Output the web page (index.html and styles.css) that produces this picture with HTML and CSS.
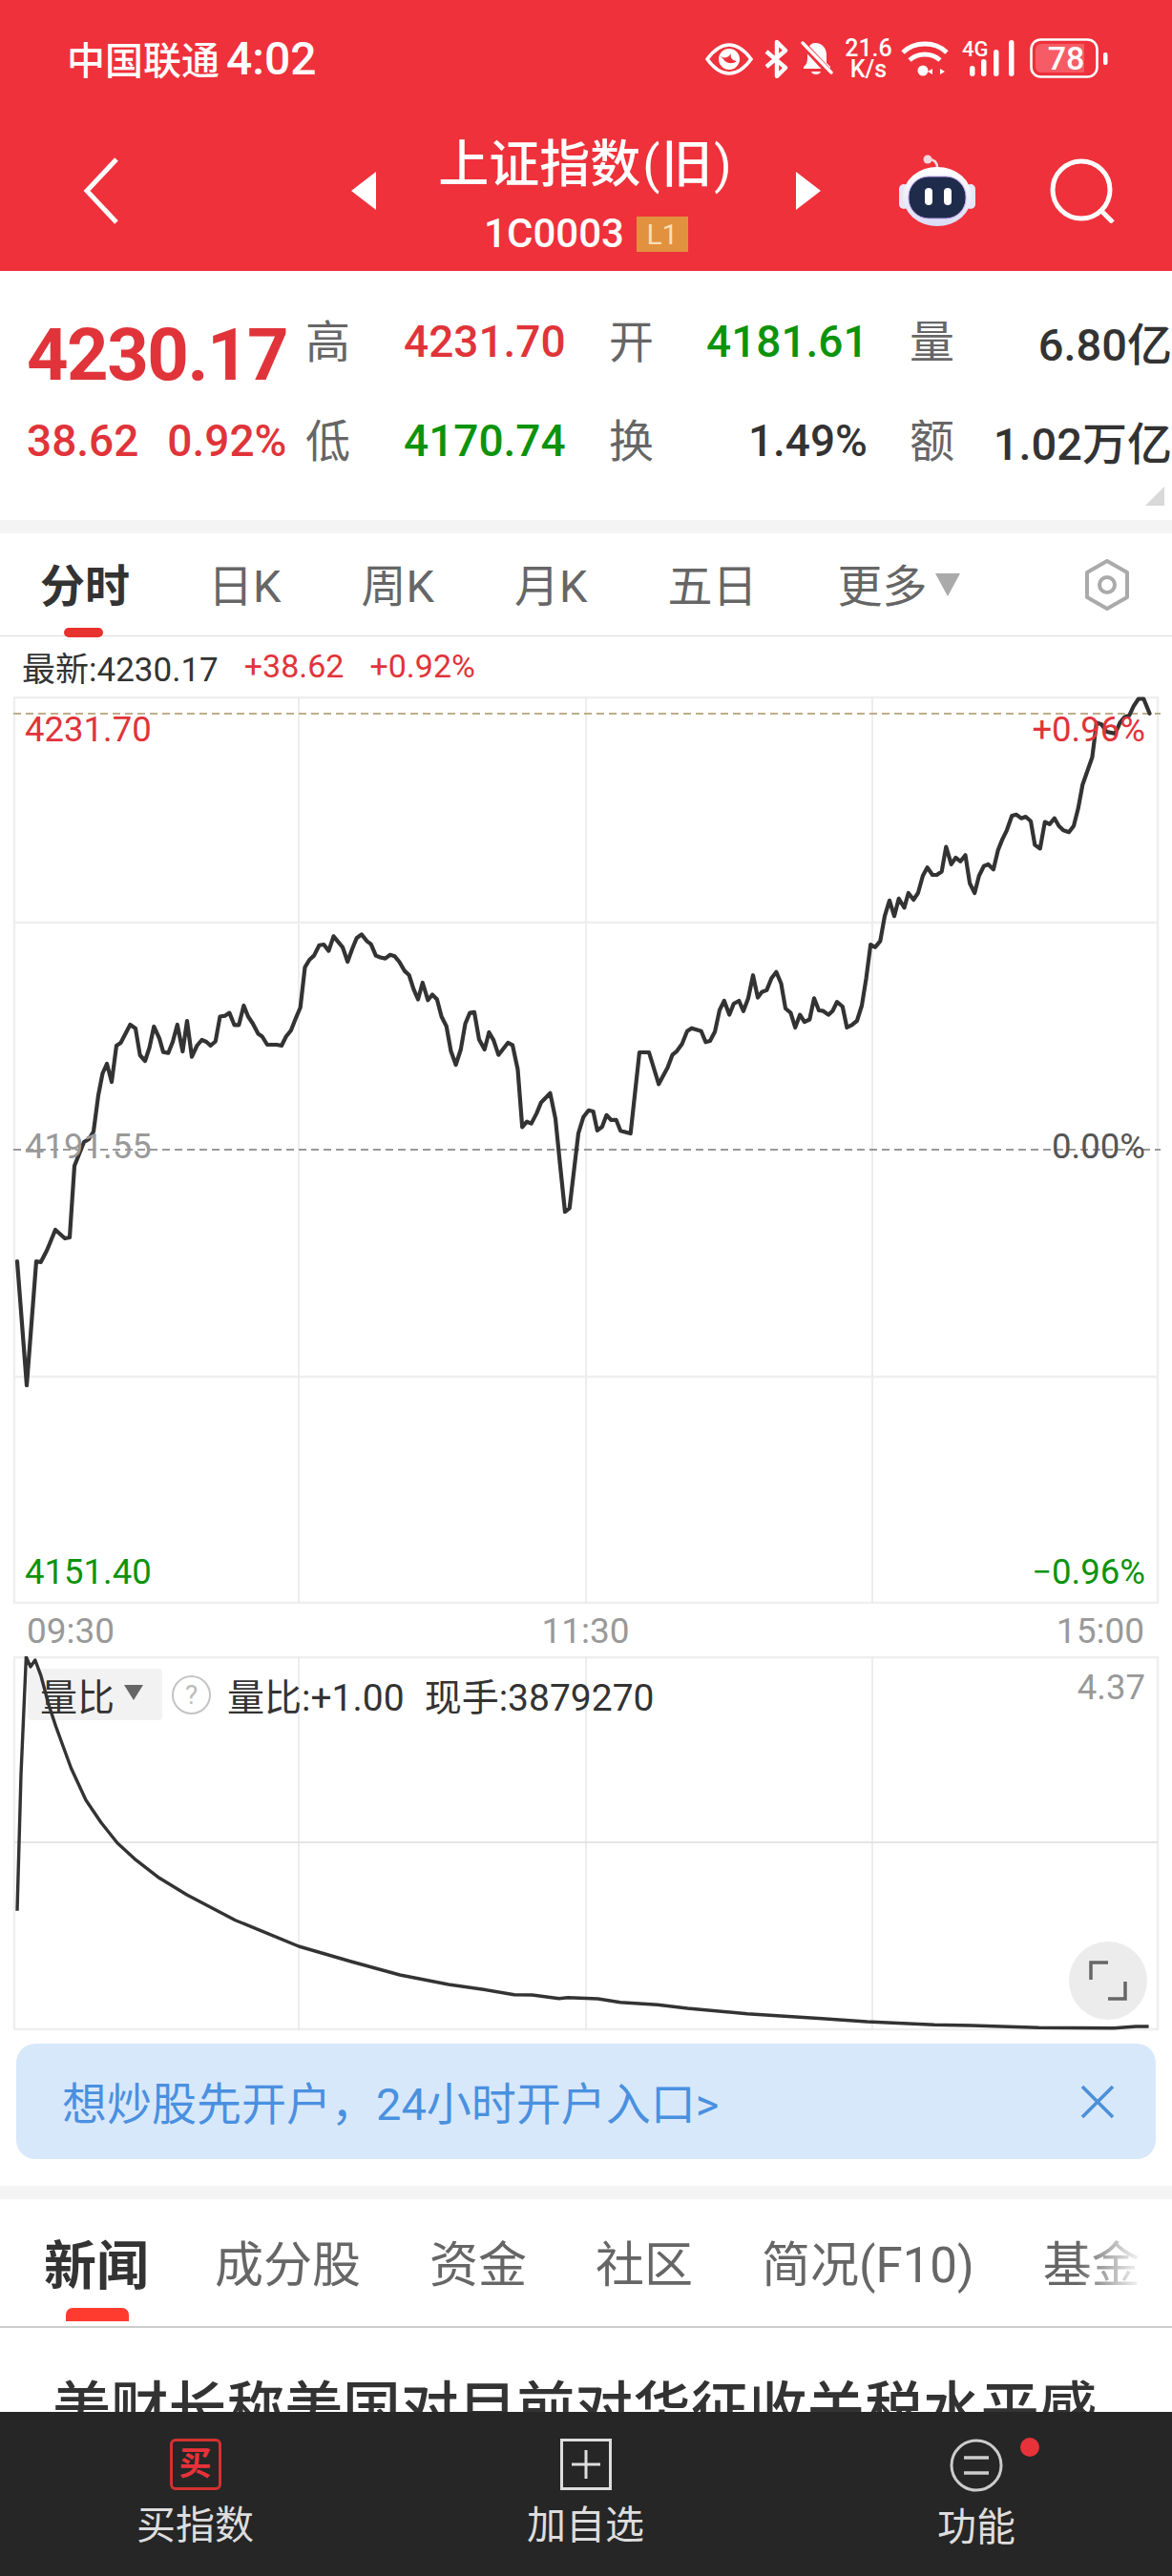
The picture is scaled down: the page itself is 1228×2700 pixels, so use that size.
FILE: index.html
```html
<!DOCTYPE html>
<html lang="zh-CN">
<head>
  <meta charset="UTF-8" />
  <meta name="viewport" content="width=device-width, initial-scale=1.0" />
  <title>上证指数(旧)</title>
  <link rel="stylesheet" href="styles.css">
</head>
<body>
  <div class="page">
    <header class="top">
      <div class="status">
        <div class="carrier">中国联通 <span class="clock">4:02</span></div>
        <div class="status-icons">
          <svg class="ic-eye" width="50" height="34" viewBox="0 0 50 34">
            <path d="M2 17C10 6 18 2 25 2s15 4 23 15c-8 11-16 15-23 15S10 28 2 17z" fill="none" stroke="#fff" stroke-width="3.600"/>
            <circle cx="25" cy="17" r="11" fill="#fff"/>
            <path d="M15 13c4 4 9 3 12-2-1 5 1 7 6 8-5 4-12 2-14-2z" fill="#ee313b"/>
          </svg>
          <svg class="ic-bt" width="28" height="40" viewBox="0 0 28 40">
            <path d="M3 12l20 17-9 9V2l9 9L3 28" fill="none" stroke="#fff" stroke-width="4.400" stroke-linejoin="round"/>
          </svg>
          <svg class="ic-bell" width="34" height="38" viewBox="0 0 34 38">
            <path d="M15 3c8 0 12 6 12 13v8l4 4v2H3v-2c3-2 4-5 4-9V10c2-4 4-7 8-7z" fill="#fff"/>
            <path d="M11 33h10c-1 4-9 4-10 0z" fill="#fff"/>
            <path d="M1 3l30 32" stroke="#ee313b" stroke-width="7"/>
            <path d="M2 3l30 31" stroke="#fff" stroke-width="3.400" stroke-linecap="round"/>
          </svg>
          <div class="speed"><span>21.6</span><span>K/s</span></div>
          <svg class="ic-wifi" width="50" height="38" viewBox="0 0 50 38">
            <path d="M2 13C14 1 36 1 48 13M9 21c9-8 23-8 32 0" fill="none" stroke="#fff" stroke-width="4.800"/>
            <circle cx="23" cy="32" r="5.500" fill="#fff"/>
            <path d="M33 30l-5 3 5 3zM41 30l5 3-5 3z" fill="#fff"/>
          </svg>
          <svg class="ic-signal" width="56" height="42" viewBox="0 0 56 42">
            <text x="0" y="19" class="net">4G</text>
            <rect x="8" y="29" width="5.500" height="11" rx="2.700" fill="#fff"/>
            <rect x="20" y="22" width="5.500" height="18" rx="2.700" fill="#fff"/>
            <rect x="33" y="12" width="5.500" height="28" rx="2.700" fill="#fff"/>
            <rect x="49" y="2" width="5.500" height="38" rx="2.700" fill="#fff"/>
          </svg>
          <svg class="ic-batt" width="82" height="42" viewBox="0 0 82 42">
            <rect x="1.500" y="1.500" width="69" height="39" rx="10" fill="none" stroke="#fff" stroke-width="2.600"/>
            <path d="M12 6h45v30H12a6 6 0 0 1-6-6V12a6 6 0 0 1 6-6z" fill="#f65c66"/>
            <text x="38" y="33" class="level">78</text>
            <rect x="77" y="15" width="4.500" height="13" rx="2" fill="#fff"/>
          </svg>
        </div>
      </div>
      <nav class="bar">
        <svg class="back" width="38" height="70" viewBox="0 0 38 70"><path d="M35 2L4 35l31 33" fill="none" stroke="#fff" stroke-width="5"/></svg>
        <span class="tri tri-left"></span>
        <div class="title">
          <div class="name">上证指数<span class="paren">(</span>旧<span class="paren">)</span></div>
          <div class="code">1C0003<span class="level-tag">L1</span></div>
        </div>
        <span class="tri tri-right"></span>
        <svg class="robot" width="80" height="76" viewBox="0 0 80 76">
          <defs>
            <linearGradient id="shell" x1="0" y1="0" x2="0" y2="1">
              <stop offset="0" stop-color="#ffffff"/>
              <stop offset="1" stop-color="#dcdcf6"/>
            </linearGradient>
          </defs>
          <circle cx="30" cy="5" r="4.500" fill="#f1d9de"/>
          <path d="M31 5c7 0 9 4 9 9" fill="none" stroke="#f1d9de" stroke-width="2.600"/>
          <rect x="0" y="31" width="10" height="26" rx="5" fill="#e6e6f8"/>
          <rect x="70" y="31" width="10" height="26" rx="5" fill="#e6e6f8"/>
          <ellipse cx="40" cy="44" rx="36" ry="31" fill="url(#shell)"/>
          <rect x="10" y="23" width="60" height="44" rx="21" fill="#1f2b4b" stroke="#b9a3ee" stroke-width="1"/>
          <rect x="27" y="35" width="8" height="18" rx="4" fill="#fff"/>
          <rect x="47" y="35" width="8" height="18" rx="4" fill="#fff"/>
        </svg>
        <svg class="search" width="68" height="68" viewBox="0 0 68 68">
          <circle cx="33" cy="33" r="30" fill="none" stroke="#fff" stroke-width="5"/>
          <path d="M52 53l14 14" stroke="#fff" stroke-width="5"/>
        </svg>
      </nav>
    </header>

    <section class="quote">
      <div class="last red">4230.17</div>
      <div class="lbl">高</div>
      <div class="val red">4231.70</div>
      <div class="lbl">开</div>
      <div class="val green mid-col">4181.61</div>
      <div class="lbl">量</div>
      <div class="val right">6.80亿</div>
      <div class="change red"><span>38.62</span><span>0.92%</span></div>
      <div class="lbl">低</div>
      <div class="val green">4170.74</div>
      <div class="lbl">换</div>
      <div class="val mid-col">1.49%</div>
      <div class="lbl">额</div>
      <div class="val right">1.02万亿</div>
      <span class="corner"></span>
    </section>

    <div class="band"></div>

    <section class="periods">
      <span class="period on">分时</span>
      <span class="period">日K</span>
      <span class="period">周K</span>
      <span class="period">月K</span>
      <span class="period">五日</span>
      <span class="period more">更多<i class="caret"></i></span>
      <svg class="gear" width="54" height="54" viewBox="0 0 54 54">
        <path d="M27 2l21 12v26L27 52 6 40V14z" fill="none" stroke="#aaa" stroke-width="4" stroke-linejoin="round"/>
        <circle cx="27" cy="27" r="8" fill="none" stroke="#aaa" stroke-width="4"/>
      </svg>
    </section>

    <div class="latest">
      <span>最新:4230.17</span>
      <span class="red">+38.62</span>
      <span class="red">+0.92%</span>
    </div>

    <section class="chart price-chart">
      <svg width="1228" height="951" viewBox="0 730 1228 951">
        <path class="grid-out" d="M15 731H1213V1680H15z"/>
        <path class="grid" d="M313 731V1680M614 731V1680M914 731V1680"/>
        <path class="grid-h" d="M15 967H1213M15 1443H1213"/>
        <path class="dash-high" d="M14 748H1216"/>
        <path class="dash-mid" d="M14 1205H1216"/>
        <polyline class="trend" points="18,1322 28,1452 38,1322 42.700,1323 49.400,1310 58,1289 68,1298 73,1297 78,1222 88,1197 93,1194 98,1186 103,1148 107.500,1125 112,1115 117,1134 122,1096 126.500,1093 136.400,1074 142,1078 146.700,1106 152,1112 156.600,1098 161.300,1076 167,1088.400 171,1102.600 176.300,1103.700 181,1092 185.800,1074 191.400,1102 196,1070 201,1107.600 206.400,1096 211.500,1090 216.300,1092 220.600,1096 225.800,1091.500 230.500,1065.500 235.700,1064.700 240.400,1061.600 245.500,1074.300 250.300,1074.300 255.400,1054 260,1065.500 265,1073 270.500,1083.500 274.800,1086.500 280,1095 290,1095 295,1096 299.700,1086.500 304.900,1080 309.600,1068 314.700,1056 319.500,1013.800 324.200,1006 329,1001.600 334.500,990.800 339.300,990 344.400,996.600 349.500,981.300 359,992.800 364.200,1008 369,994.700 373.700,983.200 378.800,979.400 384.300,986.300 388.700,989.700 393.800,1001.600 398.600,1003.500 403.700,1004.600 408.800,1000.800 413.600,1002.300 418.300,1008 423.900,1017.600 428.600,1022 433.400,1036.800 438,1047.500 442.800,1030 448.400,1048.300 453,1042.500 457.900,1047.500 462.600,1065.500 467.800,1075.800 472.500,1101.800 477.600,1116 482.800,1100 487.500,1073 492.300,1061.600 497,1060.900 502,1089.600 507.700,1100 512.400,1082 517.200,1090.400 522.300,1105.700 532.200,1093 537,1095.300 542.500,1121 547.200,1181.400 552,1175.700 556.700,1177.600 562.300,1166.900 567,1155.400 576.500,1145.800 582,1172.600 587.200,1224.300 592,1270.200 596.700,1266.400 606,1188 611.300,1170.700 616.800,1163.800 621.600,1165 625.800,1184.900 630.900,1181 635.500,1168.800 640.200,1173.800 645.600,1173.800 650.200,1185.300 660.700,1188 670,1103 680,1103 690.200,1136.300 699.500,1119 704.500,1105.700 709.100,1101.800 714.600,1094.200 720,1080.800 724.700,1077.700 734.700,1080.800 739.400,1092.300 744,1091 749,1081.600 754,1058.600 758.800,1049 764.200,1063.600 768.800,1052 774.300,1049 778.900,1059.700 784,1046.300 789,1022.200 794,1045.600 798.300,1039.800 803.300,1037.900 808.400,1025.300 813.400,1018.800 818.500,1031 823,1057 828.500,1061.600 833.200,1077 838.200,1063.600 842.900,1071.200 848.300,1068.500 853,1046.300 858,1059 862.600,1059.700 868,1063.600 872.300,1059.700 877,1050.200 882.800,1055 887.400,1077 892.500,1074.300 897.900,1070 903,1054 907.600,1025.300 912.200,990 916.900,992.800 922.300,986.300 927,960.200 932,943.800 937,960.200 941.700,941.900 947.500,951.400 951.800,936 957.200,943 961.900,936 966.900,918 971.600,909.300 977,917 981.600,917 986.700,913.500 991.300,887.500 996.700,905.900 1001.400,899 1006.400,902.800 1011.500,896.300 1016.100,925.800 1021.200,936 1025.800,918 1030.900,907.800 1035.500,905.900 1040.900,911.300 1045.600,891.400 1050.200,879.900 1054.900,870.300 1060.300,855 1065,853.800 1070,857.700 1074.700,856 1080,860.700 1084.300,885.600 1089.800,889.400 1094.800,861.500 1099.800,863.800 1104.900,857.700 1109.500,865.700 1114.200,870.300 1120,872.200 1125,865.700 1129.700,847.300 1134.300,822.500 1144.400,793.800 1149,757.400 1154.100,759.300 1159.500,767 1168.500,768.900 1173.500,757.400 1178.100,751.700 1183.200,749.800 1187.800,740.200 1192.900,732.500 1198.300,732.500 1204.500,747.800"/>
      </svg>
      <span class="tag tag-l tag-top red">4231.70</span>
      <span class="tag tag-r tag-top red">+0.96%</span>
      <span class="tag tag-l tag-mid grey">4191.55</span>
      <span class="tag tag-r tag-mid dark">0.00%</span>
      <span class="tag tag-l tag-low green">4151.40</span>
      <span class="tag tag-r tag-low green">−0.96%</span>
    </section>

    <div class="times">
      <span>09:30</span>
      <span>11:30</span>
      <span>15:00</span>
    </div>

    <section class="chart ratio-chart">
      <svg width="1228" height="394" viewBox="0 1736 1228 394">
        <path class="grid-out" d="M15 1737H1213V2127H15z"/>
        <path class="grid" d="M313 1737V2127M614 1737V2127M914 1737V2127"/>
        <path class="grid-mid" d="M15 1931H1213"/>
      </svg>
      <div class="ratio-head">
        <div class="picker">量比<i class="caret dark-caret"></i></div>
        <span class="help">?</span>
        <span>量比:+1.00</span>
        <span class="now">现手:3879270</span>
      </div>
      <svg class="ratio-line" width="1228" height="394" viewBox="0 1736 1228 394">
        <polyline class="ratio-trend" points="18,2002.700 22,1860 27.400,1736.700 32,1747 36.800,1740 43,1756.700 51,1786.700 58.700,1810 74.400,1853 90,1886.700 105.700,1910 123,1931.700 141,1948.300 166.800,1968.300 195.800,1986 246.700,2012.700 313,2040 368,2056 419,2070 470,2080 505,2085 538.800,2090.700 557.600,2091 585.800,2094.700 595,2093.700 626.500,2095 650,2098.700 689,2101.300 720.400,2105 783,2110.700 861.400,2115.700 908.400,2119 979,2122.300 1018,2123 1088.500,2125.300 1166.800,2125.700 1190.300,2124 1203.600,2124"/>
      </svg>
      <span class="tag tag-r ratio-max grey">4.37</span>
      <button class="expand">
        <svg width="42" height="42" viewBox="0 0 42 42">
          <path d="M21 2H3v18M21 40h18V22" fill="none" stroke="#666" stroke-width="3.500"/>
        </svg>
      </button>
    </section>

    <div class="promo">
      <span>想炒股先开户，24小时开户入口&gt;</span>
      <svg width="36" height="36" viewBox="0 0 36 36"><path d="M2 2l32 32M34 2L2 34" stroke="#4a8fd9" stroke-width="3.600"/></svg>
    </div>

    <div class="band band-news"></div>

    <section class="news-tabs">
      <span class="news-tab on">新闻</span>
      <span class="news-tab">成分股</span>
      <span class="news-tab">资金</span>
      <span class="news-tab">社区</span>
      <span class="news-tab">简况(F10)</span>
      <span class="news-tab">基金</span>
    </section>

    <section class="news">
      <div class="headline">美财长称美国对目前对华征收关税水平感</div>
    </section>

    <footer class="actions">
      <div class="action">
        <span class="buy-box">买</span>
        <span>买指数</span>
      </div>
      <div class="action">
        <svg width="54" height="54" viewBox="0 0 54 54">
          <rect x="1.500" y="1.500" width="51" height="51" fill="none" stroke="#ddd" stroke-width="3"/>
          <path d="M27 12v30M12 27h30" stroke="#ddd" stroke-width="3"/>
        </svg>
        <span>加自选</span>
      </div>
      <div class="action action-more">
        <svg width="56" height="56" viewBox="0 0 56 56">
          <circle cx="28" cy="28" r="26" fill="none" stroke="#ccc" stroke-width="3"/>
          <path d="M15 20h26M15 36h26" stroke="#ccc" stroke-width="3.400"/>
        </svg>
        <i class="dot"></i>
        <span>功能</span>
      </div>
    </footer>
  </div>
</body>
</html>
```

FILE: styles.css
```css
body {
  margin: 0;
  background: #fff;
  font-family: Roboto, "Noto Sans CJK SC", sans-serif;
  color: #333;
}
.page {
  width: 1228px;
  height: 2700px;
  overflow: hidden;
  display: flex;
  flex-direction: column;
  position: relative;
}
.red { color: #e0343a; }
.green { color: #0c930c; }
.grey { color: #999; }
.dark { color: #555; }
svg { display: block; }

/* red header */
.top {
  height: 284px;
  background: #ee313b;
  color: #fff;
}
.status {
  height: 125px;
  display: flex;
  justify-content: space-between;
  align-items: flex-start;
  padding: 0 67px 0 70px;
}
.carrier {
  margin-top: 36px;
  font-size: 40px;
  line-height: 52px;
  font-weight: 500;
}
.clock { font-size: 48px; margin-left: -3px; }
.status-icons {
  display: flex;
  align-items: flex-start;
  margin-top: 40px;
}
.ic-eye { margin: 5px 11px 0 0; }
.ic-bt { margin: 2px 11px 0 0; }
.ic-bell { margin: 2px 12px 0 0; }
.speed {
  width: 50px;
  margin-right: 9px;
  display: flex;
  flex-direction: column;
  align-items: center;
  font-size: 25px;
  line-height: 22px;
  font-weight: 500;
}
.ic-wifi { margin: 2px 14px 0 0; }
.ic-signal { margin: 0 15px 0 0; }
.net { font-size: 22px; font-weight: 500; fill: #fff; }
.level { font-size: 34px; font-weight: 500; fill: #fff; text-anchor: middle; }

.bar {
  height: 150px;
  display: flex;
  align-items: center;
  padding-left: 87px;
}
.back { margin-right: 243px; }
.tri {
  width: 0;
  height: 0;
  border-top: 20px solid transparent;
  border-bottom: 20px solid transparent;
}
.tri-left { border-right: 26px solid #fff; }
.tri-right { border-left: 26px solid #fff; }
.title {
  width: 440px;
  align-self: flex-start;
  padding-top: 12px;
  text-align: center;
}
.name {
  font-size: 53px;
  line-height: 72px;
  font-weight: 500;
}
.paren { font-weight: 400; margin: 0 2px; }
.code {
  font-size: 42px;
  line-height: 72px;
  display: flex;
  justify-content: center;
  align-items: center;
  font-weight: 500;
}
.level-tag {
  width: 54px;
  height: 37px;
  margin-left: 13px;
  background: #e2923f;
  color: #f9dfb4;
  font-size: 30px;
  line-height: 37px;
  font-weight: 400;
}
.robot { margin-left: 82px; }
.search { margin-left: 78px; }

/* quote numbers */
.quote {
  height: 261px;
  box-sizing: border-box;
  padding: 21px 0 0 28px;
  display: grid;
  grid-template-columns: 292px 103px 215px 102px 213px 64px 211px;
  grid-template-rows: 105px 103px;
  align-items: center;
  font-size: 46px;
  position: relative;
}
.lbl { color: #666; font-size: 47px; margin-bottom: 7px; }
.val { font-weight: 500; white-space: nowrap; }
.right { text-align: right; font-size: 47px; }
.mid-col { text-align: right; padding-right: 44px; }
.last {
  padding-top: 28px;
  font-size: 76px;
  line-height: 90px;
  font-weight: 700;
  letter-spacing: -1.500px;
  white-space: nowrap;
}
.change {
  display: flex;
  gap: 30px;
  font-size: 46px;
  font-weight: 500;
}
.corner {
  position: absolute;
  right: 8px;
  bottom: 15px;
  width: 0;
  height: 0;
  border-left: 20px solid transparent;
  border-bottom: 20px solid #d9d9d9;
}
.band {
  height: 14px;
  background: #f4f4f4;
  flex: none;
}

/* period tabs */
.periods {
  height: 108px;
  box-sizing: border-box;
  flex: none;
  display: flex;
  align-items: center;
  gap: 84px;
  padding: 0 0 5px 42px;
  border-bottom: 1px solid #ddd;
  position: relative;
  color: #666;
  font-size: 47px;
}
.period.on {
  color: #333;
  font-weight: 700;
  position: relative;
  margin-right: -2px;
}
.period.on::after {
  content: "";
  position: absolute;
  left: 25px;
  bottom: -23px;
  width: 41px;
  height: 10px;
  border-radius: 5px;
  background: #e8322f;
}
.caret {
  display: inline-block;
  width: 0;
  height: 0;
  margin-left: 8px;
  vertical-align: 6px;
  border-left: 13px solid transparent;
  border-right: 13px solid transparent;
  border-top: 24px solid #aaa;
}
.gear {
  position: absolute;
  left: 1133px;
  top: 27px;
}
.latest {
  height: 62px;
  flex: none;
  box-sizing: border-box;
  padding-left: 23px;
  display: flex;
  align-items: center;
  gap: 27px;
  font-size: 35px;
}
.latest .red { font-size: 34px; }

/* charts */
.chart {
  position: relative;
  flex: none;
}
.price-chart { height: 951px; margin-top: 1px; }
.grid-out { fill: none; stroke: #eee; stroke-width: 2.500; }
.grid { fill: none; stroke: #e8e8e8; stroke-width: 1.500; }
.grid-h { fill: none; stroke: #eee; stroke-width: 2.500; }
.grid-mid { fill: none; stroke: #ddd; stroke-width: 1.500; }
.dash-high { stroke: #bfae8a; stroke-width: 2; stroke-dasharray: 8 5; }
.dash-mid { stroke: #999; stroke-width: 2; stroke-dasharray: 8 5; }
.trend {
  fill: none;
  stroke: #333;
  stroke-width: 4.200;
  stroke-linejoin: round;
  stroke-linecap: round;
}
.tag {
  position: absolute;
  font-size: 36.500px;
  line-height: 44px;
}
.tag-l { left: 26px; }
.tag-r { right: 28px; }
.tag-top { top: 13px; }
.tag-mid { top: 450px; }
.tag-low { top: 896px; }
.times {
  height: 55px;
  flex: none;
  box-sizing: border-box;
  padding: 2px 29px 0 28px;
  display: flex;
  justify-content: space-between;
  align-items: center;
  color: #999;
  font-size: 37px;
}
.ratio-chart { height: 393px; }
.ratio-line {
  position: absolute;
  left: 0;
  top: 0;
}
.ratio-trend {
  fill: none;
  stroke: #333;
  stroke-width: 3.400;
  stroke-linejoin: round;
}
.ratio-head {
  position: absolute;
  left: 29px;
  top: 12px;
  display: flex;
  align-items: center;
  font-size: 39px;
  color: #333;
}
.picker {
  width: 141px;
  height: 54px;
  box-sizing: border-box;
  padding-left: 13px;
  display: flex;
  align-items: center;
  background: #f2f2f2;
  border-radius: 4px;
  font-size: 39px;
}
.dark-caret {
  margin: 0 0 4px 10px;
  border-left-width: 10px;
  border-right-width: 10px;
  border-top: 16px solid #666;
}
.help {
  width: 37px;
  height: 37px;
  margin: 0 17px 0 10px;
  border: 2.500px solid #c4c4c4;
  border-radius: 50%;
  color: #bbb;
  font-size: 28px;
  line-height: 37px;
  text-align: center;
}
.now { margin-left: 21px; }
.ratio-max { top: 11px; }
.expand {
  position: absolute;
  left: 1120px;
  top: 299px;
  width: 82px;
  height: 82px;
  padding: 0;
  border: 0;
  border-radius: 50%;
  background: #ececec;
  display: flex;
  align-items: center;
  justify-content: center;
}

/* promo strip */
.promo {
  height: 121px;
  flex: none;
  box-sizing: border-box;
  margin: 13px 17px 28px;
  padding: 0 43px 3px 48px;
  display: flex;
  justify-content: space-between;
  align-items: center;
  background: #d8e8fb;
  border-radius: 20px;
  color: #4a90e0;
  font-size: 47px;
}
.promo svg { margin-top: 3px; }

/* news */
.news-tabs {
  height: 135px;
  flex: none;
  box-sizing: border-box;
  padding: 0 0 4px 46px;
  display: flex;
  align-items: center;
  gap: 72px;
  border-bottom: 2px solid #ccc;
  font-size: 51px;
  color: #666;
  position: relative;
  white-space: nowrap;
}
.news-tabs::after {
  content: "";
  position: absolute;
  right: 30px;
  top: 30px;
  width: 70px;
  height: 80px;
  background: linear-gradient(to right, rgba(255,255,255,0), #fff);
}
.news-tab.on {
  color: #333;
  font-size: 55px;
  font-weight: 700;
  position: relative;
  margin-right: -3px;
}
.news-tab.on::after {
  content: "";
  position: absolute;
  left: 23px;
  bottom: -23px;
  width: 66px;
  height: 14px;
  border-radius: 7px 7px 0 0;
  background: #ff3b30;
}
.news {
  height: 88px;
  flex: none;
  overflow: hidden;
  padding: 46px 0 0 55px;
  box-sizing: border-box;
}
.headline {
  font-size: 60.800px;
  line-height: 80px;
  font-weight: 500;
  white-space: nowrap;
}
.actions {
  height: 172px;
  flex: none;
  display: grid;
  grid-template-columns: 409px 409px 410px;
  background: #262626;
  color: #ddd;
  font-size: 41px;
}
.action {
  display: flex;
  flex-direction: column;
  align-items: center;
  padding-top: 28px;
  position: relative;
}
.action > span:last-child { margin-top: 9px; line-height: 56px; }
.buy-box {
  width: 54px;
  height: 54px;
  box-sizing: border-box;
  border: 3px solid #d63030;
  border-radius: 6px;
  color: #e8323a;
  font-size: 34px;
  line-height: 46px;
  text-align: center;
  font-weight: 700;
}
.dot {
  position: absolute;
  left: 251px;
  top: 27px;
  width: 20px;
  height: 20px;
  border-radius: 50%;
  background: #e8323a;
}
```
